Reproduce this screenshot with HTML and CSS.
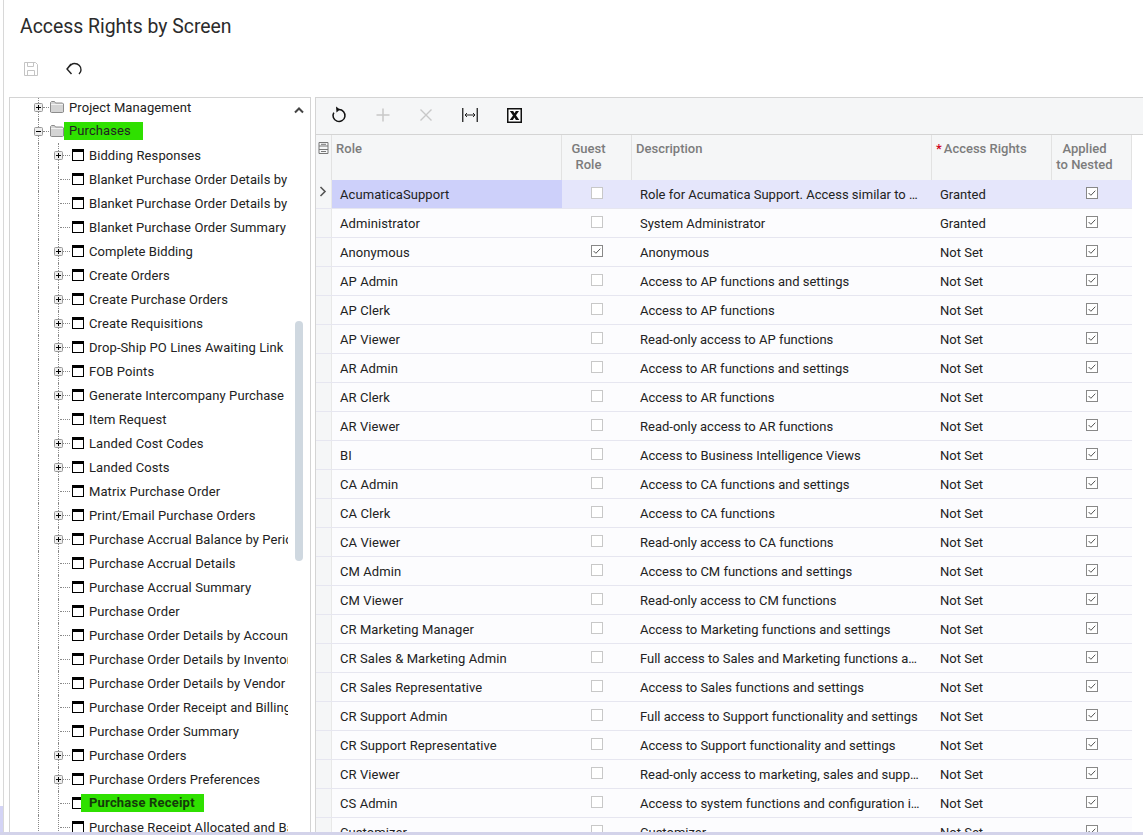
FILE: index.html
```html
<!DOCTYPE html>
<html lang="en">
<head>
<meta charset="utf-8">
<title>Access Rights by Screen</title>
<link rel="stylesheet" href="styles.css">
</head>
<body>
<svg class="defs" width="0" height="0" aria-hidden="true">
  <symbol id="plus" viewBox="0 0 9 9"><rect x=".5" y=".5" width="8" height="8" rx="1" fill="#eee" stroke="#999"/><path d="M2 4.5h5M4.5 2v5" stroke="#000"/></symbol>
  <symbol id="minus" viewBox="0 0 9 9"><rect x=".5" y=".5" width="8" height="8" rx="1" fill="#eee" stroke="#999"/><path d="M2 4.5h5" stroke="#000"/></symbol>
  <symbol id="folder" viewBox="0 0 14 12"><path d="M.5 3V1.500l1-1h3l1 1.500h7l1 1v8l-1 .5h-11l-1-.5z" fill="#d4d4d4" stroke="#8c8c8c"/><path d="M1 3.500h12" stroke="#f2f2f2"/></symbol>
  <symbol id="screen" viewBox="0 0 12 12"><rect x=".5" y=".5" width="11" height="11" fill="#fff" stroke="#000"/><rect x="0" y="0" width="12" height="3" fill="#000"/></symbol>
  <symbol id="box" viewBox="0 0 12 12"><rect x=".5" y=".5" width="11" height="11" fill="#fff" stroke="#c8c8c8"/></symbol>
  <symbol id="tick" viewBox="0 0 12 12"><rect x=".5" y=".5" width="11" height="11" fill="#fff" stroke="#888"/><path d="M2.600 6l2.300 2.300 4.400-4.600" fill="none" stroke="#555"/></symbol>
</svg>
<div class="page">
  <h1 class="title">Access Rights by Screen</h1>
  <div class="actions">
    <svg class="act" width="16" height="16" viewBox="0 0 16 16"><path d="M1.500 1.500h11l2 2v11h-13z M4.500 1.500v4h6v-4 M4.500 14.500v-5h7v5" fill="none" stroke="#c4c4c4"/></svg>
    <svg class="act" width="16" height="14" viewBox="0 0 16 14"><path d="M5.500 12 1 7 5 2M1.500 6.500C4 3 6 1.500 8.500 1.500 12.500 1.500 15.300 4.500 15 8 15 9.500 14 11 13 12" fill="none" stroke="#222" stroke-width="1.400"/></svg>
  </div>
  <div class="split">
    <div class="tree">
      <div class="tree-inner">
        <div class="node lvl1"><svg class="exp"><use href="#plus"/></svg><i class="dash short"></i><svg class="folder"><use href="#folder"/></svg><span>Project Management</span></div>
        <div class="node lvl1"><svg class="exp"><use href="#minus"/></svg><i class="dash short"></i><svg class="folder"><use href="#folder"/></svg><span class="mark mark-a">Purchases</span></div>
        <div class="node lvl2"><svg class="exp"><use href="#plus"/></svg><i class="dash short"></i><svg class="scr"><use href="#screen"/></svg><span>Bidding Responses</span></div>
        <div class="node lvl2"><i class="dash"></i><svg class="scr"><use href="#screen"/></svg><span>Blanket Purchase Order Details by</span></div>
        <div class="node lvl2"><i class="dash"></i><svg class="scr"><use href="#screen"/></svg><span>Blanket Purchase Order Details by</span></div>
        <div class="node lvl2"><i class="dash"></i><svg class="scr"><use href="#screen"/></svg><span>Blanket Purchase Order Summary</span></div>
        <div class="node lvl2"><svg class="exp"><use href="#plus"/></svg><i class="dash short"></i><svg class="scr"><use href="#screen"/></svg><span>Complete Bidding</span></div>
        <div class="node lvl2"><svg class="exp"><use href="#plus"/></svg><i class="dash short"></i><svg class="scr"><use href="#screen"/></svg><span>Create Orders</span></div>
        <div class="node lvl2"><svg class="exp"><use href="#plus"/></svg><i class="dash short"></i><svg class="scr"><use href="#screen"/></svg><span>Create Purchase Orders</span></div>
        <div class="node lvl2"><svg class="exp"><use href="#plus"/></svg><i class="dash short"></i><svg class="scr"><use href="#screen"/></svg><span>Create Requisitions</span></div>
        <div class="node lvl2"><svg class="exp"><use href="#plus"/></svg><i class="dash short"></i><svg class="scr"><use href="#screen"/></svg><span>Drop-Ship PO Lines Awaiting Link</span></div>
        <div class="node lvl2"><svg class="exp"><use href="#plus"/></svg><i class="dash short"></i><svg class="scr"><use href="#screen"/></svg><span>FOB Points</span></div>
        <div class="node lvl2"><svg class="exp"><use href="#plus"/></svg><i class="dash short"></i><svg class="scr"><use href="#screen"/></svg><span>Generate Intercompany Purchase</span></div>
        <div class="node lvl2"><i class="dash"></i><svg class="scr"><use href="#screen"/></svg><span>Item Request</span></div>
        <div class="node lvl2"><svg class="exp"><use href="#plus"/></svg><i class="dash short"></i><svg class="scr"><use href="#screen"/></svg><span>Landed Cost Codes</span></div>
        <div class="node lvl2"><svg class="exp"><use href="#plus"/></svg><i class="dash short"></i><svg class="scr"><use href="#screen"/></svg><span>Landed Costs</span></div>
        <div class="node lvl2"><i class="dash"></i><svg class="scr"><use href="#screen"/></svg><span>Matrix Purchase Order</span></div>
        <div class="node lvl2"><svg class="exp"><use href="#plus"/></svg><i class="dash short"></i><svg class="scr"><use href="#screen"/></svg><span>Print/Email Purchase Orders</span></div>
        <div class="node lvl2"><svg class="exp"><use href="#plus"/></svg><i class="dash short"></i><svg class="scr"><use href="#screen"/></svg><span>Purchase Accrual Balance by Period</span></div>
        <div class="node lvl2"><i class="dash"></i><svg class="scr"><use href="#screen"/></svg><span>Purchase Accrual Details</span></div>
        <div class="node lvl2"><i class="dash"></i><svg class="scr"><use href="#screen"/></svg><span>Purchase Accrual Summary</span></div>
        <div class="node lvl2"><i class="dash"></i><svg class="scr"><use href="#screen"/></svg><span>Purchase Order</span></div>
        <div class="node lvl2"><i class="dash"></i><svg class="scr"><use href="#screen"/></svg><span>Purchase Order Details by Account</span></div>
        <div class="node lvl2"><i class="dash"></i><svg class="scr"><use href="#screen"/></svg><span>Purchase Order Details by Inventory</span></div>
        <div class="node lvl2"><i class="dash"></i><svg class="scr"><use href="#screen"/></svg><span>Purchase Order Details by Vendor</span></div>
        <div class="node lvl2"><i class="dash"></i><svg class="scr"><use href="#screen"/></svg><span>Purchase Order Receipt and Billing</span></div>
        <div class="node lvl2"><i class="dash"></i><svg class="scr"><use href="#screen"/></svg><span>Purchase Order Summary</span></div>
        <div class="node lvl2"><svg class="exp"><use href="#plus"/></svg><i class="dash short"></i><svg class="scr"><use href="#screen"/></svg><span>Purchase Orders</span></div>
        <div class="node lvl2"><svg class="exp"><use href="#plus"/></svg><i class="dash short"></i><svg class="scr"><use href="#screen"/></svg><span>Purchase Orders Preferences</span></div>
        <div class="node lvl2"><i class="dash"></i><svg class="scr"><use href="#screen"/></svg><span class="mark mark-b">Purchase Receipt</span></div>
        <div class="node lvl2"><i class="dash"></i><svg class="scr"><use href="#screen"/></svg><span>Purchase Receipt Allocated and Balance</span></div>
      </div>
      <div class="scrollbar">
        <svg class="chev" width="10" height="7" viewBox="0 0 10 7"><path d="M1 5.500 5 1.500l4 4" fill="none" stroke="#444" stroke-width="2"/></svg>
        <div class="thumb"></div>
      </div>
    </div>
    <div class="grid">
      <div class="toolbar">
        <svg class="tool" width="16" height="18" viewBox="0 0 16 18"><path d="M8 3.500a6 6 0 1 1-5.200 3" fill="none" stroke="#111" stroke-width="1.500"/><path d="M5 .5 9 3.500 5.500 6.500z" fill="#111"/></svg>
        <svg class="tool" width="16" height="16" viewBox="0 0 16 16"><path d="M8 1.500v13M1.500 8h13" stroke="#c8c8c8" stroke-width="1.500"/></svg>
        <svg class="tool" width="14" height="14" viewBox="0 0 14 14"><path d="M1.500 1.500l11 11M12.500 1.500l-11 11" stroke="#c8c8c8" stroke-width="1.400"/></svg>
        <svg class="tool tool-fit" width="16" height="14" viewBox="0 0 16 14"><path d="M.75 0v14M15.250 0v14" stroke="#222" stroke-width="1.300"/><path d="M3 7h10M5 5 3 7l2 2M11 5l2 2-2 2" fill="none" stroke="#222"/></svg>
        <svg class="tool" width="15" height="15" viewBox="0 0 15 15"><rect x=".75" y=".75" width="13.500" height="13.500" fill="#fff" stroke="#111" stroke-width="1.500"/><path d="M2.800 3h3.400l1.300 2.300L8.800 3h3.200L9 7.200l3.300 4.800H8.900L7.400 9.500 5.900 12H2.700L6 7.400z" fill="#111"/></svg>
      </div>
      <div class="table">
        <div class="row head">
          <div class="c gut"><svg width="11" height="12" viewBox="0 0 11 12"><path d="M1 .5h9v11H1zM1 4h9M1 7.500h9M3 2.300h5M3 9.500h5" fill="none" stroke="#777"/></svg></div>
          <div class="c role">Role</div>
          <div class="c guest">Guest<br>Role</div>
          <div class="c desc">Description</div>
          <div class="c acc"><b class="req">*</b>Access Rights</div>
          <div class="c nest">Applied<br>to Nested</div>
        </div>
        <div class="row sel"><div class="c gut"><svg width="8" height="11" viewBox="0 0 8 11"><path d="M1.500 1l4.500 4.500L1.500 10" fill="none" stroke="#555" stroke-width="1.600"/></svg></div><div class="c role">AcumaticaSupport</div><div class="c guest"><svg class="cb"><use href="#box"/></svg></div><div class="c desc">Role for Acumatica Support. Access similar to Administrator</div><div class="c acc">Granted</div><div class="c nest"><svg class="cb"><use href="#tick"/></svg></div></div>
        <div class="row"><div class="c gut"></div><div class="c role">Administrator</div><div class="c guest"><svg class="cb"><use href="#box"/></svg></div><div class="c desc">System Administrator</div><div class="c acc">Granted</div><div class="c nest"><svg class="cb"><use href="#tick"/></svg></div></div>
        <div class="row"><div class="c gut"></div><div class="c role">Anonymous</div><div class="c guest"><svg class="cb"><use href="#tick"/></svg></div><div class="c desc">Anonymous</div><div class="c acc">Not Set</div><div class="c nest"><svg class="cb"><use href="#tick"/></svg></div></div>
        <div class="row"><div class="c gut"></div><div class="c role">AP Admin</div><div class="c guest"><svg class="cb"><use href="#box"/></svg></div><div class="c desc">Access to AP functions and settings</div><div class="c acc">Not Set</div><div class="c nest"><svg class="cb"><use href="#tick"/></svg></div></div>
        <div class="row"><div class="c gut"></div><div class="c role">AP Clerk</div><div class="c guest"><svg class="cb"><use href="#box"/></svg></div><div class="c desc">Access to AP functions</div><div class="c acc">Not Set</div><div class="c nest"><svg class="cb"><use href="#tick"/></svg></div></div>
        <div class="row"><div class="c gut"></div><div class="c role">AP Viewer</div><div class="c guest"><svg class="cb"><use href="#box"/></svg></div><div class="c desc">Read-only access to AP functions</div><div class="c acc">Not Set</div><div class="c nest"><svg class="cb"><use href="#tick"/></svg></div></div>
        <div class="row"><div class="c gut"></div><div class="c role">AR Admin</div><div class="c guest"><svg class="cb"><use href="#box"/></svg></div><div class="c desc">Access to AR functions and settings</div><div class="c acc">Not Set</div><div class="c nest"><svg class="cb"><use href="#tick"/></svg></div></div>
        <div class="row"><div class="c gut"></div><div class="c role">AR Clerk</div><div class="c guest"><svg class="cb"><use href="#box"/></svg></div><div class="c desc">Access to AR functions</div><div class="c acc">Not Set</div><div class="c nest"><svg class="cb"><use href="#tick"/></svg></div></div>
        <div class="row"><div class="c gut"></div><div class="c role">AR Viewer</div><div class="c guest"><svg class="cb"><use href="#box"/></svg></div><div class="c desc">Read-only access to AR functions</div><div class="c acc">Not Set</div><div class="c nest"><svg class="cb"><use href="#tick"/></svg></div></div>
        <div class="row"><div class="c gut"></div><div class="c role">BI</div><div class="c guest"><svg class="cb"><use href="#box"/></svg></div><div class="c desc">Access to Business Intelligence Views</div><div class="c acc">Not Set</div><div class="c nest"><svg class="cb"><use href="#tick"/></svg></div></div>
        <div class="row"><div class="c gut"></div><div class="c role">CA Admin</div><div class="c guest"><svg class="cb"><use href="#box"/></svg></div><div class="c desc">Access to CA functions and settings</div><div class="c acc">Not Set</div><div class="c nest"><svg class="cb"><use href="#tick"/></svg></div></div>
        <div class="row"><div class="c gut"></div><div class="c role">CA Clerk</div><div class="c guest"><svg class="cb"><use href="#box"/></svg></div><div class="c desc">Access to CA functions</div><div class="c acc">Not Set</div><div class="c nest"><svg class="cb"><use href="#tick"/></svg></div></div>
        <div class="row"><div class="c gut"></div><div class="c role">CA Viewer</div><div class="c guest"><svg class="cb"><use href="#box"/></svg></div><div class="c desc">Read-only access to CA functions</div><div class="c acc">Not Set</div><div class="c nest"><svg class="cb"><use href="#tick"/></svg></div></div>
        <div class="row"><div class="c gut"></div><div class="c role">CM Admin</div><div class="c guest"><svg class="cb"><use href="#box"/></svg></div><div class="c desc">Access to CM functions and settings</div><div class="c acc">Not Set</div><div class="c nest"><svg class="cb"><use href="#tick"/></svg></div></div>
        <div class="row"><div class="c gut"></div><div class="c role">CM Viewer</div><div class="c guest"><svg class="cb"><use href="#box"/></svg></div><div class="c desc">Read-only access to CM functions</div><div class="c acc">Not Set</div><div class="c nest"><svg class="cb"><use href="#tick"/></svg></div></div>
        <div class="row"><div class="c gut"></div><div class="c role">CR Marketing Manager</div><div class="c guest"><svg class="cb"><use href="#box"/></svg></div><div class="c desc">Access to Marketing functions and settings</div><div class="c acc">Not Set</div><div class="c nest"><svg class="cb"><use href="#tick"/></svg></div></div>
        <div class="row"><div class="c gut"></div><div class="c role">CR Sales &amp; Marketing Admin</div><div class="c guest"><svg class="cb"><use href="#box"/></svg></div><div class="c desc">Full access to Sales and Marketing functions and settings</div><div class="c acc">Not Set</div><div class="c nest"><svg class="cb"><use href="#tick"/></svg></div></div>
        <div class="row"><div class="c gut"></div><div class="c role">CR Sales Representative</div><div class="c guest"><svg class="cb"><use href="#box"/></svg></div><div class="c desc">Access to Sales functions and settings</div><div class="c acc">Not Set</div><div class="c nest"><svg class="cb"><use href="#tick"/></svg></div></div>
        <div class="row"><div class="c gut"></div><div class="c role">CR Support Admin</div><div class="c guest"><svg class="cb"><use href="#box"/></svg></div><div class="c desc">Full access to Support functionality and settings</div><div class="c acc">Not Set</div><div class="c nest"><svg class="cb"><use href="#tick"/></svg></div></div>
        <div class="row"><div class="c gut"></div><div class="c role">CR Support Representative</div><div class="c guest"><svg class="cb"><use href="#box"/></svg></div><div class="c desc">Access to Support functionality and settings</div><div class="c acc">Not Set</div><div class="c nest"><svg class="cb"><use href="#tick"/></svg></div></div>
        <div class="row"><div class="c gut"></div><div class="c role">CR Viewer</div><div class="c guest"><svg class="cb"><use href="#box"/></svg></div><div class="c desc">Read-only access to marketing, sales and support functions</div><div class="c acc">Not Set</div><div class="c nest"><svg class="cb"><use href="#tick"/></svg></div></div>
        <div class="row"><div class="c gut"></div><div class="c role">CS Admin</div><div class="c guest"><svg class="cb"><use href="#box"/></svg></div><div class="c desc">Access to system functions and configuration in the system</div><div class="c acc">Not Set</div><div class="c nest"><svg class="cb"><use href="#tick"/></svg></div></div>
        <div class="row"><div class="c gut"></div><div class="c role">Customizer</div><div class="c guest"><svg class="cb"><use href="#box"/></svg></div><div class="c desc">Customizer</div><div class="c acc">Not Set</div><div class="c nest"><svg class="cb"><use href="#tick"/></svg></div></div>
      </div>
    </div>
  </div>
</div>
</body>
</html>
```
FILE: styles.css
```css
* { box-sizing: border-box; }
html, body { margin: 0; height: 100%; }
body {
  width: 1143px;
  height: 835px;
  overflow: hidden;
  background: #fff;
  color: #222;
  font-family: Roboto, "Liberation Sans", Arial, sans-serif;
  font-size: 13px;
  border-bottom: 3px solid #d3d3ea;
  position: relative;
}
body::before {
  content: "";
  position: absolute;
  left: 0;
  top: 806px;
  width: 3px;
  height: 26px;
  background: #d3d3f5;
}
body::after {
  content: "";
  position: absolute;
  left: 1128px;
  top: 832px;
  width: 1px;
  height: 3px;
  background: #555;
}
.defs { position: absolute; }
.page {
  height: 832px;
  margin-left: 3px;
  border-left: 1px solid #d8d8d8;
  display: flex;
  flex-direction: column;
  overflow: hidden;
}
.title {
  margin: 0;
  padding: 15px 0 0 16px;
  height: 50px;
  font-size: 19.4px;
  font-weight: 400;
  line-height: 24px;
  color: #2b2b2b;
}
.actions {
  height: 47px;
  padding-left: 19px;
  display: flex;
  align-items: center;
  gap: 27px;
  padding-bottom: 10px;
}
.split { flex: 1; display: flex; min-height: 0; }
.tree {
  width: 302px;
  margin-left: 5px;
  border: 1px solid #d4d4d4;
  border-bottom: 0;
  display: flex;
  overflow: hidden;
}
.tree-inner { width: 278px; margin-top: -3px; overflow: hidden; flex: none; letter-spacing: .09px; }
.node {
  height: 24px;
  display: flex;
  align-items: center;
  white-space: nowrap;
  position: relative;
}
.node::before {
  content: "";
  position: absolute;
  top: 0;
  bottom: 0;
  border-left: 1px dotted #888;
}
.lvl1 { padding-left: 24px; }
.lvl1::before { left: 28px; }
.lvl2 { padding-left: 44px; }
.lvl2::before { left: 48px; }
.lvl2::after {
  content: "";
  position: absolute;
  top: 0;
  bottom: 0;
  left: 28px;
  border-left: 1px dotted #888;
}
.node span { padding-left: 5px; }
.exp { width: 9px; height: 9px; flex: none; position: relative; z-index: 1; }
.dash { flex: none; border-top: 1px dotted #888; width: 10px; margin-left: 6px; }
.dash.short { width: 6px; margin-left: 0; }
.lvl2 .dash.short { width: 7px; }
.folder { width: 14px; height: 12px; flex: none; margin-left: 1px; }
.scr { width: 12px; height: 12px; flex: none; margin-left: 2px; }
.node .mark { background: #2fe000; line-height: 18px; position: relative; z-index: 1; }
.node .mark-a { margin-left: 0; padding: 0 12px 0 5px; }
.node .mark-b { margin-left: -3px; padding: 0 9px 0 8px; font-weight: 700; letter-spacing: .2px; color: #143a0a; }
.scrollbar {
  flex: 1;
  display: flex;
  flex-direction: column;
  align-items: center;
  padding-top: 9px;
}
.thumb {
  width: 8px;
  height: 240px;
  margin-top: 207px;
  border-radius: 4px;
  background: #cfd8e0;
}
.grid {
  flex: 1;
  min-width: 0;
  margin-left: 4px;
  border-left: 1px solid #d4d4d4;
  border-top: 1px solid #d4d4d4;
  overflow: hidden;
}
.toolbar {
  height: 37px;
  background: #f5f6f7;
  border-bottom: 1px solid #d4d4d4;
  display: flex;
  align-items: center;
  gap: 28px;
  padding: 0 0 2px 15px;
}
.tool-fit { margin-left: 1px; margin-right: 1px; }
.table { width: 816px; }
.row {
  display: flex;
  height: 29px;
  background: #fcfcfe;
  border-bottom: 1px solid #e6e6f0;
  color: #222;
}
.c {
  height: 100%;
  display: flex;
  align-items: center;
  flex: none;
  white-space: nowrap;
  overflow: hidden;
}
.gut { width: 16px; background: #f5f6f7; justify-content: center; border-right: 1px solid #e8e8e8; padding: 0 1px 6px 0; }
.role { width: 230px; padding-left: 8px; letter-spacing: .08px; }
.guest { width: 70px; justify-content: center; }
.desc { width: 300px; padding: 0 12px 0 8px; display: block; line-height: 29px; text-overflow: ellipsis; }
.acc { width: 120px; padding-left: 8px; }
.nest { width: 80px; justify-content: center; }
.cb { width: 12px; height: 12px; margin-top: -3px; }
.row.sel { background: #e5e6fb; }
.sel .role { background: #cdd0fa; }
.sel .gut { background: #f5f6f7; }
.head {
  height: 45px;
  background: #f5f6f7;
  border-bottom: 0;
  font-weight: 500;
  color: #7c7c7c;
  line-height: 16px;
}
.head .c {
  align-items: flex-start;
  padding-top: 6px;
  border-right: 1px solid #e2e2e2;
}
.head .gut { padding: 7px 0 0; }
.head .role { padding-left: 4px; }
.head .guest { text-align: center; padding-right: 16px; }
.head .nest { text-align: center; padding-right: 14px; }
.head .desc { display: flex; padding-left: 4px; line-height: 16px; }
.head .acc { padding-left: 4px; }
.req { color: #d0021b; font-weight: 500; margin-right: 2px; }
```
